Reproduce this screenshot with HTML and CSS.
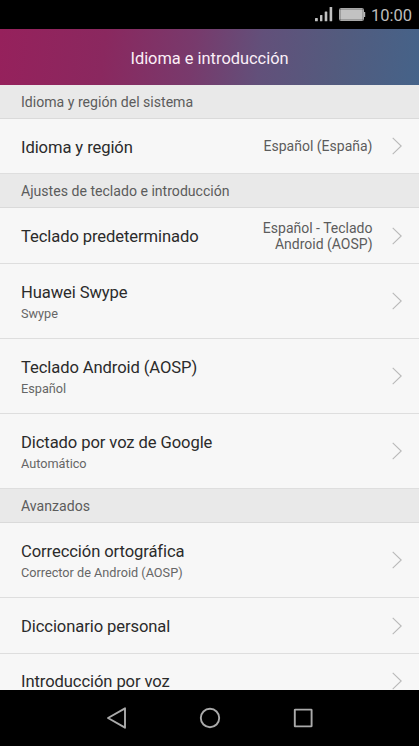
FILE: index.html
```html
<!DOCTYPE html>
<html lang="es">
<head>
<meta charset="utf-8">
<title>Idioma e introducción</title>
<link rel="stylesheet" href="styles.css">
</head>
<body>
<svg width="0" height="0" class="defs"><symbol id="chevron" viewBox="0 0 10 18"><path d="M.7 .8 9.2 9 .7 17.2" fill="none" stroke="#b9b9b9" stroke-width="1.1"/></symbol></svg>
<div class="screen">
  <div class="status">
    <svg class="signal" width="18" height="15" viewBox="0 0 18 15" fill="#c0c0c0"><rect x="0" y="11" width="2.8" height="3.3" rx=".6"/><rect x="5" y="8" width="2.4" height="6.3" rx=".6"/><rect x="9.7" y="4.5" width="2.6" height="9.8" rx=".6"/><rect x="14.6" y="0" width="2.6" height="14.3" rx=".6"/></svg>
    <svg class="battery" width="27" height="14" viewBox="0 0 27 14"><rect x=".5" y=".5" width="24" height="12" rx="1" fill="none" stroke="#a8a8a8"/><rect x="1.2" y="1.2" width="22.6" height="10.6" fill="#c2c2c2"/><path d="M25 4h1.2v5H25z" fill="#b4b4b4"/></svg>
    <span class="clock">10:00</span>
  </div>
  <header class="header"><h1>Idioma e introducción</h1></header>
  <main class="list">
    <h2 class="section">Idioma y región del sistema</h2>
    <div class="row first"><div class="title">Idioma y región</div><div class="value">Español (España)</div><svg class="chev"><use href="#chevron"/></svg></div>
    <h2 class="section">Ajustes de teclado e introducción</h2>
    <div class="row"><div class="title">Teclado predeterminado</div><div class="value">Español - Teclado<br>Android (AOSP)</div><svg class="chev"><use href="#chevron"/></svg></div>
    <div class="row tall"><div><div class="title">Huawei Swype</div><div class="sub">Swype</div></div><svg class="chev"><use href="#chevron"/></svg></div>
    <div class="row tall"><div><div class="title">Teclado Android (AOSP)</div><div class="sub">Español</div></div><svg class="chev"><use href="#chevron"/></svg></div>
    <div class="row tall"><div><div class="title">Dictado por voz de Google</div><div class="sub">Automático</div></div><svg class="chev"><use href="#chevron"/></svg></div>
    <h2 class="section">Avanzados</h2>
    <div class="row tall"><div><div class="title">Corrección ortográfica</div><div class="sub">Corrector de Android (AOSP)</div></div><svg class="chev"><use href="#chevron"/></svg></div>
    <div class="row"><div class="title">Diccionario personal</div><svg class="chev"><use href="#chevron"/></svg></div>
    <div class="row last"><div class="title">Introducción por voz</div><svg class="chev"><use href="#chevron"/></svg></div>
  </main>
  <nav class="nav">
    <svg width="22" height="24" viewBox="0 0 22 24"><path d="M2 12 19 2.3v19.4z"/></svg>
    <svg width="22" height="24" viewBox="0 0 22 24"><circle cx="11" cy="12" r="9.2"/></svg>
    <svg width="22" height="24" viewBox="0 0 22 24"><rect x="2.8" y="3.6" width="16.8" height="16.8" rx=".5"/></svg>
  </nav>
</div>
</body>
</html>
```

FILE: styles.css
```css
* { box-sizing: border-box; }
body { margin: 0; font-family: Roboto, "Liberation Sans", sans-serif; background: #000; }
h1, h2 { margin: 0; font-weight: 400; }
.defs { display: none; }
.screen { width: 419px; height: 746px; display: flex; flex-direction: column; overflow: hidden; }
.status { flex: none; height: 29px; background: #000; display: flex; justify-content: flex-end; padding-right: 7px; color: #bdbdbd; }
.signal { margin: 7px 6px 0 0; }
.battery { margin: 8px 5px 0 0; }
.clock { font-size: 16.5px; line-height: 31px; }
.header { flex: none; height: 56px; display: flex; align-items: center; justify-content: center; background: linear-gradient(97deg, #96215c 0%, #8a285f 25%, #783a6c 46%, #62507a 62%, #535b7e 80%, #456389 100%); color: #fbeff7; }
.header h1 { font-size: 16.4px; line-height: 20px; padding-top: 3px; }
.list { flex: 1; min-height: 0; overflow: hidden; background: #f7f7f7; }
.section { height: 34px; padding-left: 21px; background: #e9e9e9; border-bottom: 1px solid #dadada; font-size: 14.1px; line-height: 35px; color: #5c5c5c; }
.row { height: 56px; display: flex; align-items: center; padding: 0 17px 0 21px; border-bottom: 1px solid #dedede; }
.row.first { height: 55px; }
.row.tall { height: 75px; }
.row.last { height: 54px; }
.title { font-size: 16.6px; letter-spacing: -.1px; line-height: 22px; color: #2b2b2b; padding-top: 2px; white-space: nowrap; }
.row > .title { padding-top: 3px; }
.sub { font-size: 12.7px; line-height: 16px; color: #666; margin-top: 2px; }
.value { margin-left: auto; margin-right: 19.5px; text-align: right; font-size: 14px; line-height: 16px; color: #5c5c5c; white-space: nowrap; }
.chev { flex: none; width: 10px; height: 18px; margin-left: auto; }
.value + .chev { margin-left: 0; }
.nav { flex: none; height: 56px; background: #000; display: flex; align-items: center; justify-content: space-between; padding: 0 105px 0 106px; }
.nav svg { fill: none; stroke: #aaa; stroke-width: 1.9; stroke-linejoin: round; }
```
